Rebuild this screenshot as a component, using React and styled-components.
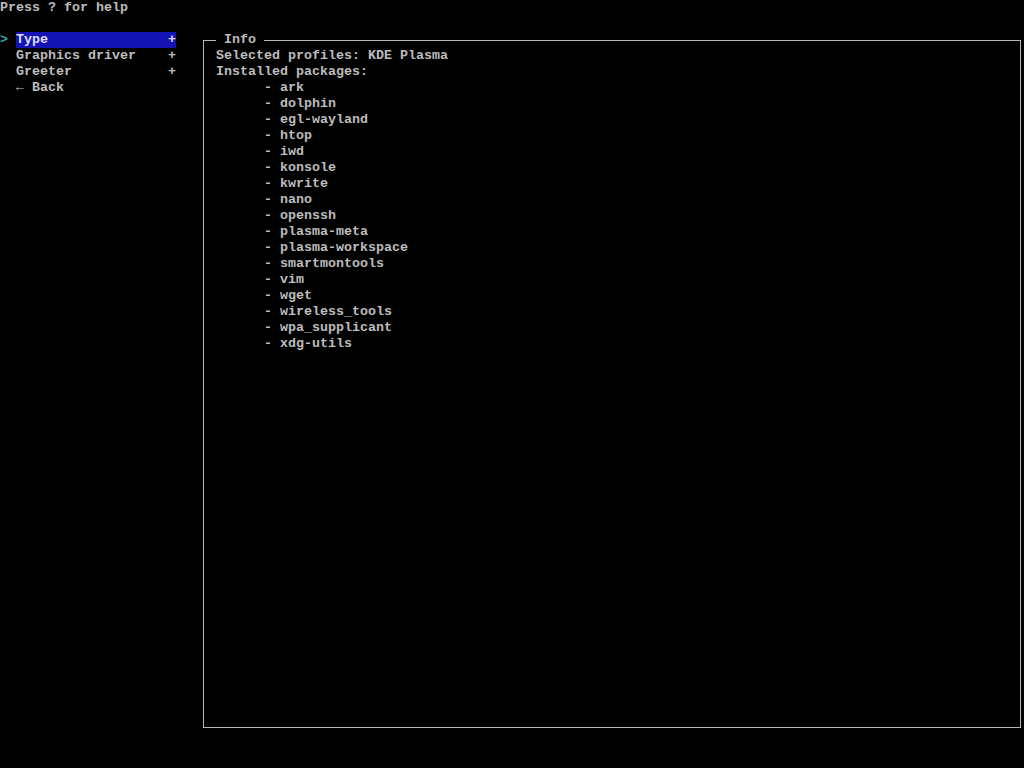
import React from 'react';
import styled, { createGlobalStyle } from 'styled-components';

const GlobalStyle = createGlobalStyle`
  html, body {
    margin: 0;
    padding: 0;
    background: #000;
  }
`;

// Terminal screen
const Screen = styled.div`
  width: 1024px;
  height: 768px;
  background: #000;
  color: #bdbdbd;
  font-family: "Liberation Mono", "DejaVu Sans Mono", monospace;
  font-size: 13.33px;
  font-weight: bold;
  line-height: 16px;
  white-space: pre;
  overflow: hidden;
`;

const HelpLine = styled.div`
  height: 16px;
  margin-bottom: 16px;
`;

const Body = styled.div`
  display: flex;
  align-items: flex-start;
`;

// Left menu
const Menu = styled.div`
  width: 176px;
  display: flex;
  flex-direction: column;
`;

const MenuRow = styled.div`
  display: flex;
  height: 16px;
`;

const Cursor = styled.span`
  width: 16px;
  color: #3aa6a6;
`;

const MenuLabel = styled.span`
  width: 160px;
  display: flex;
  justify-content: space-between;
  background: ${({ $active }) => ($active ? '#1414b4' : 'transparent')};
  color: ${({ $active }) => ($active ? '#dcdcff' : 'inherit')};
`;

const Plus = styled.span`
  width: 8px;
  text-align: center;
`;

// Info panel
const Panel = styled.fieldset`
  box-sizing: border-box;
  margin: 0 0 0 27px;
  padding: 0 0 0 12px;
  min-width: 0;
  width: 818px;
  height: 696px;
  border: 1px solid #b8b8b8;
`;

const Legend = styled.legend`
  padding: 0 8px;
  height: 16px;
  line-height: 16px;
`;

const Line = styled.div`
  height: 16px;
  padding-left: ${({ $indent }) => $indent || 0}px;
`;

const menuItems = [
  { label: 'Type', active: true, more: true },
  { label: 'Graphics driver', more: true },
  { label: 'Greeter', more: true },
  { label: '← Back' },
];

const packages = [
  'ark', 'dolphin', 'egl-wayland', 'htop', 'iwd', 'konsole', 'kwrite', 'nano',
  'openssh', 'plasma-meta', 'plasma-workspace', 'smartmontools', 'vim', 'wget',
  'wireless_tools', 'wpa_supplicant', 'xdg-utils',
];

export default function App() {
  return (
    <Screen>
      <GlobalStyle />
      <HelpLine>Press ? for help</HelpLine>
      <Body>
        <Menu>
          {menuItems.map((item) => (
            <MenuRow key={item.label}>
              <Cursor>{item.active ? '>' : ' '}</Cursor>
              <MenuLabel $active={item.active}>
                <span>{item.label}</span>
                {item.more && <Plus>+</Plus>}
              </MenuLabel>
            </MenuRow>
          ))}
        </Menu>
        <Panel>
          <Legend>Info</Legend>
          <Line>Selected profiles: KDE Plasma</Line>
          <Line>Installed packages:</Line>
          {packages.map((p) => (
            <Line key={p} $indent={48}>- {p}</Line>
          ))}
        </Panel>
      </Body>
    </Screen>
  );
}
